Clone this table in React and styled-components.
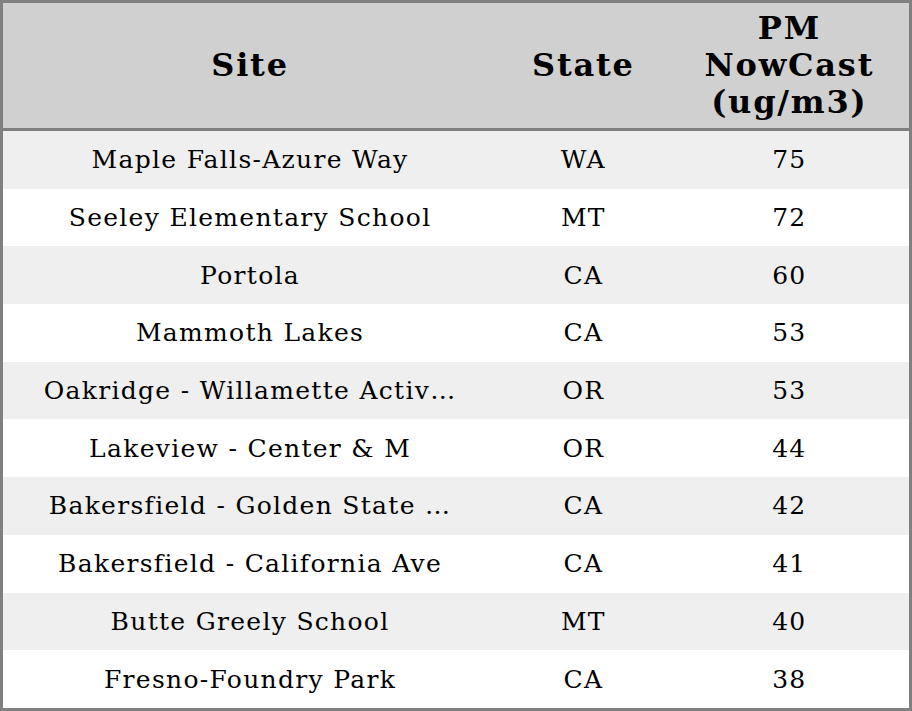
import React from 'react'
import styled, { createGlobalStyle } from 'styled-components'

const rows = [
    { site: 'Maple Falls-Azure Way', state: 'WA', pm: 75 },
    { site: 'Seeley Elementary School', state: 'MT', pm: 72 },
    { site: 'Portola', state: 'CA', pm: 60 },
    { site: 'Mammoth Lakes', state: 'CA', pm: 53 },
    { site: 'Oakridge - Willamette Activity Center', state: 'OR', pm: 53 },
    { site: 'Lakeview - Center & M', state: 'OR', pm: 44 },
    { site: 'Bakersfield - Golden State Highway', state: 'CA', pm: 42 },
    { site: 'Bakersfield - California Ave', state: 'CA', pm: 41 },
    { site: 'Butte Greely School', state: 'MT', pm: 40 },
    { site: 'Fresno-Foundry Park', state: 'CA', pm: 38 },
]

// long site names get cut to 27 chars
const shorten = (name) => (name.length > 28 ? name.slice(0, 27) + '…' : name)

function App() {
    return (
        <>
            <GlobalStyle />
            <Table>
                <colgroup>
                    <Col w={494} />
                    <Col w={172} />
                    <Col w={240} />
                </colgroup>
                <thead>
                    <tr>
                        <Th>Site</Th>
                        <Th>State</Th>
                        <Th>PM<br />NowCast<br />(ug/m3)</Th>
                    </tr>
                </thead>
                <tbody>
                    {rows.map((r, i) => (
                        <Row key={i} $striped={i % 2 === 0}>
                            <Td>{shorten(r.site)}</Td>
                            <Td>{r.state}</Td>
                            <Td>{r.pm}</Td>
                        </Row>
                    ))}
                </tbody>
            </Table>
        </>
    )
}

export default App

const GlobalStyle = createGlobalStyle`
    body {
        margin: 0;
        background: #ffffff;
        font-family: "DejaVu Serif", serif;
    }
`

const Table = styled.table`
    width: 912px;
    height: 711px;
    border-collapse: collapse;
    table-layout: fixed;
    border: 3px solid #808080;
    color: #000;
`

const Col = styled.col`
    width: ${props => props.w}px;
`

const Th = styled.th`
    background: #d0d0d0;
    font-size: 32px;
    font-weight: bold;
    letter-spacing: 1.8px;
    line-height: 37px;
    height: 125px;
    padding: 0;
    text-align: center;
    vertical-align: middle;
    border-bottom: 3px solid #808080;
`

const Row = styled.tr`
    background: ${props => (props.$striped ? '#efefef' : '#ffffff')};
`

const Td = styled.td`
    font-size: 25px;
    letter-spacing: 1.3px;
    height: 57.7px;
    padding: 0;
    text-align: center;
    vertical-align: middle;
    white-space: nowrap;
`
